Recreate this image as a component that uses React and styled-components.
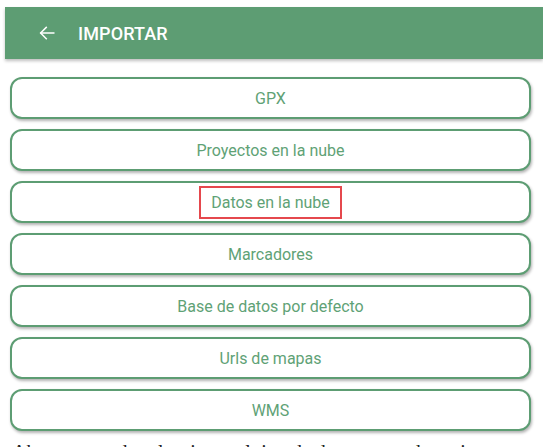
import React from 'react'
import styled, { createGlobalStyle } from 'styled-components'

const Global = createGlobalStyle`
  html, body {
    margin: 0;
    padding: 0;
    background: #ffffff;
    font-family: Roboto, "Liberation Sans", sans-serif;
    overflow: hidden;
  }
`

const Page = styled.div`
  width: 543px;
  height: 447px;
  padding-top: 7px;
  box-sizing: border-box;
  overflow: hidden;
`

const TopBar = styled.header`
  margin-left: 5px;
  height: 52px;
  background: #5d9d73;
  display: flex;
  align-items: center;
  padding-left: 33px;
  gap: 22px;
  box-shadow: 0 2px 3px rgba(0, 0, 0, 0.25);
`

const BackIcon = styled.svg`
  width: 18px;
  height: 18px;
  flex-shrink: 0;
`

const Title = styled.h1`
  margin: 0;
  color: #ffffff;
  font-size: 18px;
  font-weight: 500;
  letter-spacing: 0.1px;
`

const List = styled.div`
  display: flex;
  flex-direction: column;
  gap: 10px;
  margin: 18px 12px 0 10px;
`

const Option = styled.button`
  height: 42px;
  border: 2px solid #5d9d73;
  border-radius: 12px;
  background: #ffffff;
  box-shadow: 1px 2px 3px rgba(0, 0, 0, 0.3);
  color: #5fa276;
  font-family: Roboto, "Liberation Sans", sans-serif;
  font-size: 16px;
  display: flex;
  align-items: center;
  justify-content: center;
  cursor: pointer;
`

const Label = styled.span`
  padding: 5px 10px;
  border: ${p => (p.$marked ? '2px solid #e5484d' : '2px solid transparent')};
`

const Footnote = styled.p`
  margin: 10px 0 0 12px;
  font-family: "Liberation Serif", serif;
  font-size: 20px;
  color: #222;
  white-space: nowrap;
`

const options = [
  'GPX',
  'Proyectos en la nube',
  'Datos en la nube',
  'Marcadores',
  'Base de datos por defecto',
  'Urls de mapas',
  'WMS',
]

export default function App() {
  return (
    <>
      <Global />
      <Page>
        <TopBar>
          <BackIcon viewBox="0 0 24 24" fill="none" stroke="#fff" strokeWidth="2" strokeLinecap="square">
            <path d="M21 12H4" />
            <path d="M11 4.5L3.5 12L11 19.5" />
          </BackIcon>
          <Title>IMPORTAR</Title>
        </TopBar>
        <List>
          {options.map(o => (
            <Option key={o}>
              <Label $marked={o === 'Datos en la nube'}>{o}</Label>
            </Option>
          ))}
        </List>
        <Footnote>Ahora se puede seleccionar el tipo de dato que se desea importar en el dispositivo</Footnote>
      </Page>
    </>
  )
}
